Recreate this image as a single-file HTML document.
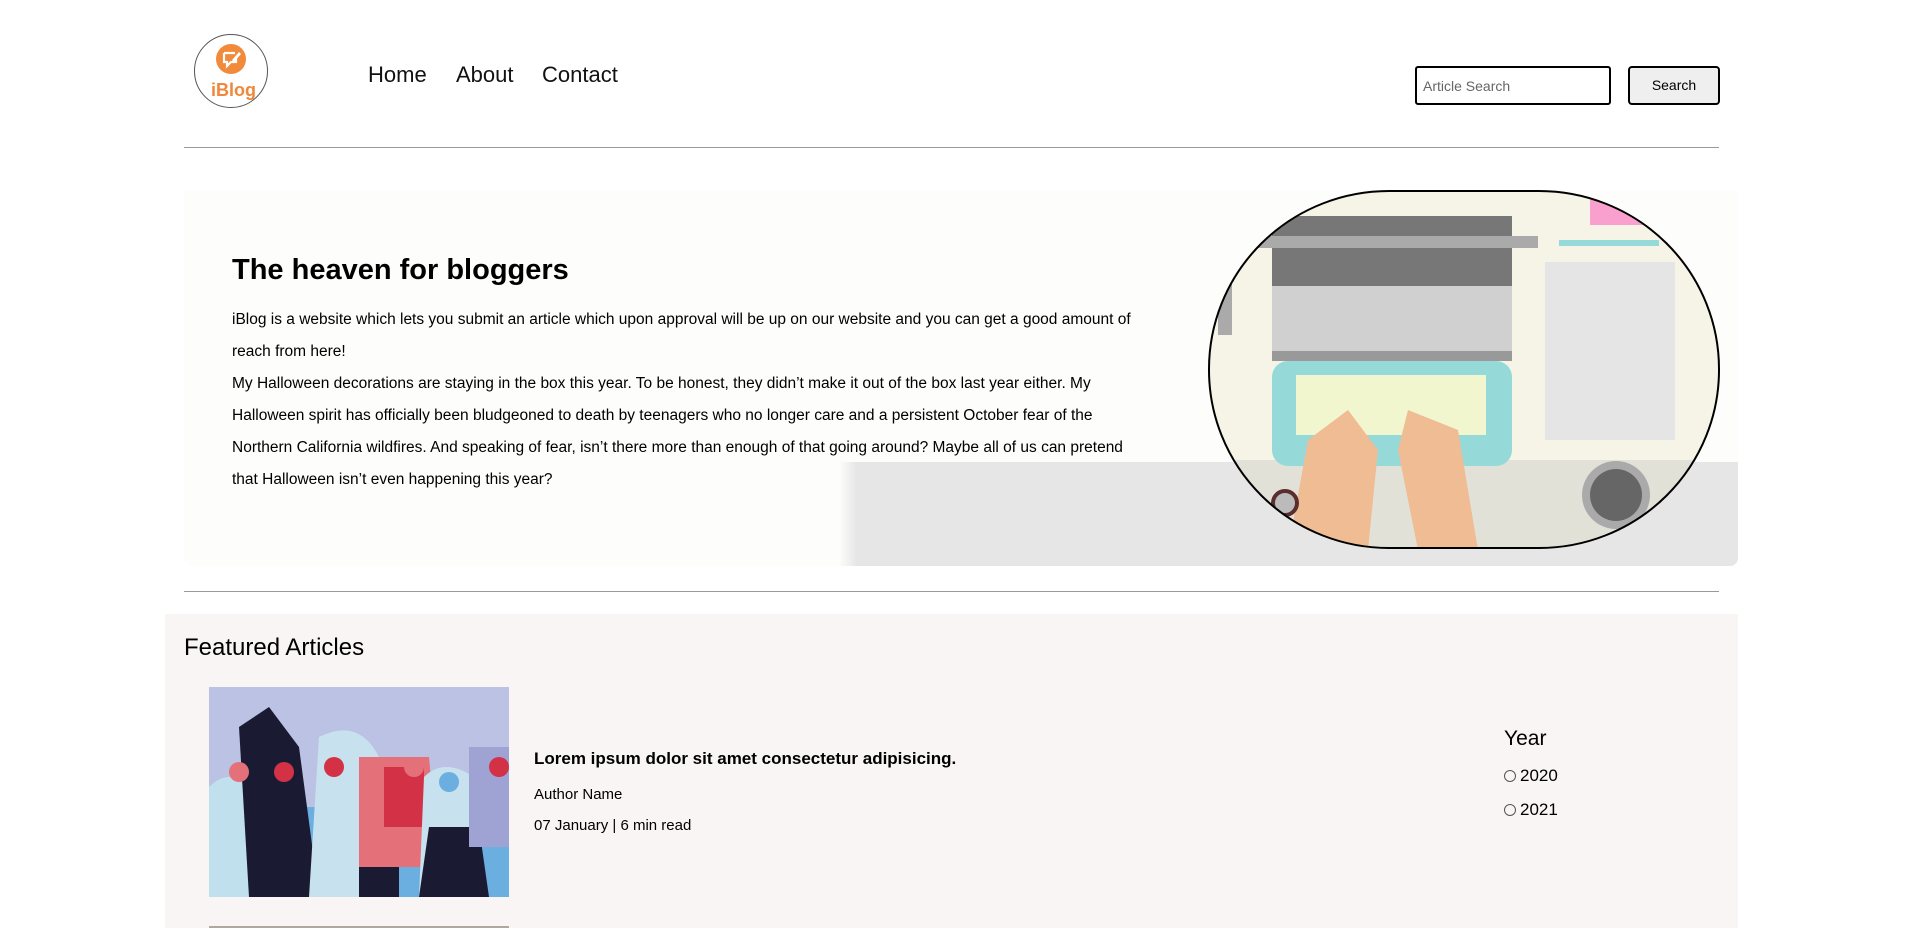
<!DOCTYPE html>
<html><head><style>
*{margin:0;padding:0;box-sizing:border-box}
body{width:1906px;height:928px;overflow:hidden;background:#fff;font-family:"Liberation Sans",sans-serif;color:#000;position:relative}
.a{position:absolute}
</style></head><body>
<div class="a" style="left:194px;top:34px;width:74px;height:74px;border:1px solid #555;border-radius:50%"></div>
<svg class="a" style="left:214px;top:42px" width="34" height="34" viewBox="0 0 34 34"><circle cx="17" cy="17" r="15" fill="#f28a3c"/><path d="M10 11h11M10 11v9h3v4l4-4h5v-5" fill="none" stroke="#fff" stroke-width="2.2"/><path d="M18 18l7-8 2 2-7 8z" fill="#fff"/></svg>
<div class="a" style="left:211px;top:80px;font-size:18px;font-weight:bold;color:#f0873a">iBlog</div>
<div class="a" style="left:368px;top:62px;font-size:22px;color:#111">Home</div>
<div class="a" style="left:456px;top:62px;font-size:22px;color:#111">About</div>
<div class="a" style="left:542px;top:62px;font-size:22px;color:#111">Contact</div>
<div class="a" style="left:1415px;top:66px;width:196px;height:39px;border:2px solid #000;border-radius:3px;font-size:14px;color:#666;padding:10px 6px">Article Search</div>
<div class="a" style="left:1628px;top:66px;width:92px;height:39px;border:2px solid #000;border-radius:4px;background:#efefef;font-size:14px;text-align:center;line-height:35px">Search</div>
<div class="a" style="left:184px;top:147px;width:1535px;height:1px;background:#999"></div>
<div class="a" style="left:184px;top:191px;width:1554px;height:375px;background:#fdfdfb;border-radius:0 0 8px 8px"></div>
<div class="a" style="left:839px;top:462px;width:899px;height:104px;background:linear-gradient(90deg,#fdfdfb,#e6e6e6 2%,#e6e6e6);border-radius:0 0 8px 0"></div>
<div class="a" style="left:232px;top:254px;font-size:29px;font-weight:bold">The heaven for bloggers</div>
<div class="a" style="left:232px;top:304px;width:912px;font-size:15.5px;line-height:32px">iBlog is a website which lets you submit an article which upon approval will be up on our website and you can get a good amount of reach from here!<br>My Halloween decorations are staying in the box this year. To be honest, they didn’t make it out of the box last year either. My Halloween spirit has officially been bludgeoned to death by teenagers who no longer care and a persistent October fear of the Northern California wildfires. And speaking of fear, isn’t there more than enough of that going around? Maybe all of us can pretend that Halloween isn’t even happening this year?</div>
<svg class="a" style="left:1208px;top:190px" width="512" height="360" viewBox="0 0 512 360">
<defs><clipPath id="c"><rect x="1" y="1" width="510" height="357" rx="180" ry="178"/></clipPath></defs>
<g clip-path="url(#c)">
<rect width="512" height="360" fill="#f5f4e6"/>
<rect x="0" y="270" width="512" height="90" fill="#e2e1d8"/>
<rect x="64" y="26" width="240" height="70" fill="#777"/>
<rect x="50" y="46" width="280" height="12" fill="#aaa"/>
<rect x="64" y="96" width="240" height="65" fill="#d0d0d0"/>
<rect x="64" y="161" width="240" height="10" fill="#999"/>
<rect x="64" y="171" width="240" height="105" rx="16" fill="#95d9d9"/>
<rect x="88" y="185" width="190" height="60" fill="#fbf8cc" opacity=".9"/>
<path d="M80 360l20-110 40-30 30 40-10 100zM210 360l-20-100 10-40 50 20 20 120z" fill="#efbc94"/>
<rect x="337" y="72" width="130" height="178" fill="#e5e5e5"/>
<rect x="382" y="0" width="54" height="35" fill="#f9a0cf"/>
<rect x="351" y="50" width="100" height="6" fill="#95d9d9"/>
<circle cx="408" cy="305" r="34" fill="#aaa"/><circle cx="408" cy="305" r="26" fill="#666"/>
<circle cx="77" cy="313" r="12" fill="#bbb" stroke="#5a2e2e" stroke-width="4"/>
<rect x="10" y="70" width="14" height="75" fill="#aaa"/>
</g>
<rect x="1" y="1" width="510" height="357" rx="180" ry="178" fill="none" stroke="#000" stroke-width="2"/>
</svg>
<div class="a" style="left:184px;top:591px;width:1535px;height:1px;background:#999"></div>
<div class="a" style="left:165px;top:614px;width:1573px;height:314px;background:#f9f5f4"></div>
<div class="a" style="left:184px;top:634px;font-size:24px">Featured Articles</div>
<svg class="a" style="left:209px;top:687px" width="300" height="210" viewBox="0 0 300 210">
<rect width="300" height="210" fill="#bcc2e4"/>
<rect x="0" y="120" width="300" height="90" fill="#6aafe0"/>
<path d="M0 100q20-20 40 0v110H0z" fill="#bfe0ec"/>
<path d="M30 40l30-20 30 40 20 150H40z" fill="#1a1a33"/>
<path d="M110 50q40-20 60 20l10 140h-80z" fill="#c7e2ee"/>
<path d="M150 180h40v30h-40z" fill="#1a1a33"/>
<path d="M150 70h70l10 110h-80z" fill="#e4707a"/>
<path d="M175 80h40v60h-40z" fill="#d33246"/>
<path d="M215 90q20-20 50 0l5 120h-60z" fill="#c7e2ee"/>
<path d="M220 140h50l10 70h-70z" fill="#1a1a33"/>
<path d="M260 60h40v100h-40z" fill="#9fa3d4"/>
<circle cx="30" cy="85" r="10" fill="#e4707a"/><circle cx="75" cy="85" r="10" fill="#d33246"/><circle cx="125" cy="80" r="10" fill="#d33246"/><circle cx="205" cy="80" r="10" fill="#e4707a"/><circle cx="240" cy="95" r="10" fill="#6aafe0"/><circle cx="290" cy="80" r="10" fill="#d33246"/>
</svg>
<div class="a" style="left:209px;top:926px;width:300px;height:2px;background:#b0a8a0"></div>
<div class="a" style="left:534px;top:749px;font-size:17px;font-weight:bold">Lorem ipsum dolor sit amet consectetur adipisicing.</div>
<div class="a" style="left:534px;top:786px;font-size:15px">Author Name</div>
<div class="a" style="left:534px;top:817px;font-size:15px">07 January | 6 min read</div>
<div class="a" style="left:1504px;top:727px;font-size:21px">Year</div>
<div class="a" style="left:1504px;top:766px;font-size:17px;display:flex;align-items:center"><span style="width:12px;height:12px;border:1px solid #555;border-radius:50%;display:inline-block;margin-right:4px"></span>2020</div>
<div class="a" style="left:1504px;top:800px;font-size:17px;display:flex;align-items:center"><span style="width:12px;height:12px;border:1px solid #555;border-radius:50%;display:inline-block;margin-right:4px"></span>2021</div>
</body></html>
